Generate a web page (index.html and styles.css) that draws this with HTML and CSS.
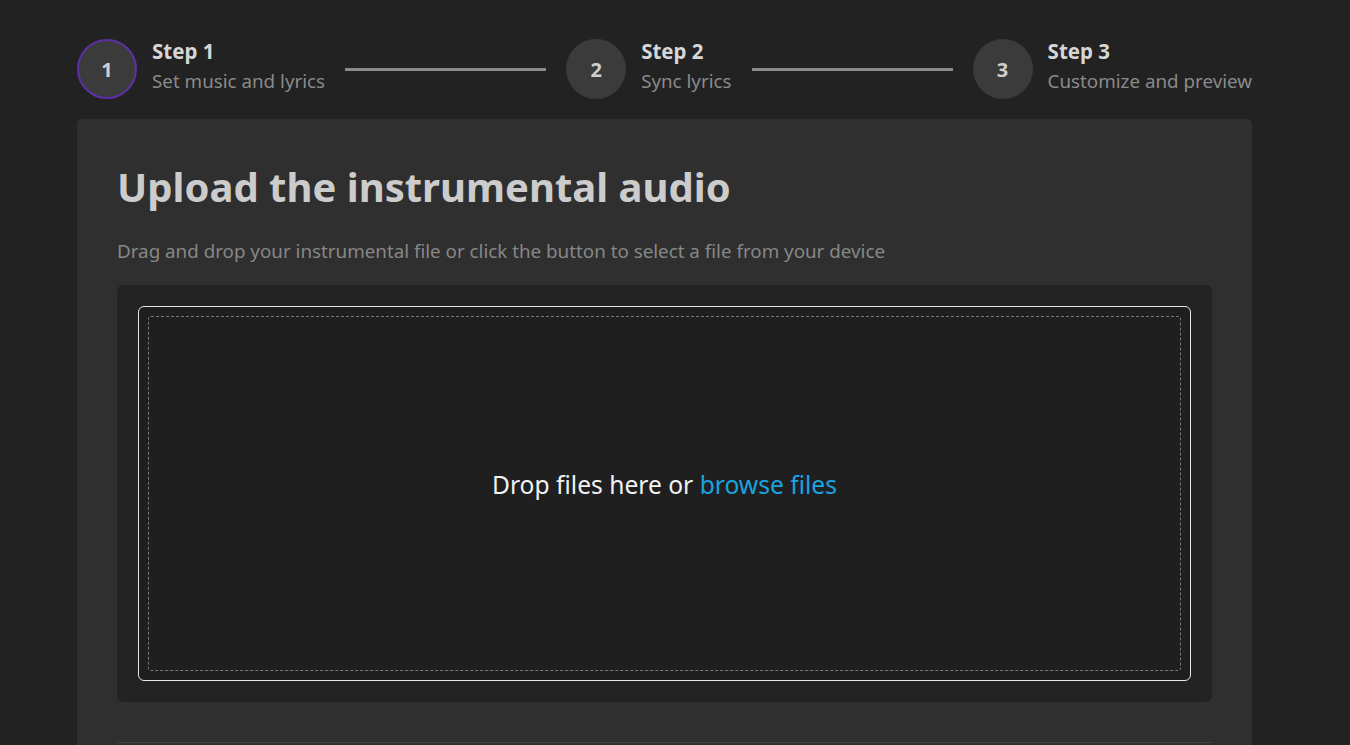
FILE: index.html
```html
<!DOCTYPE html>
<html lang="en">
<head>
<meta charset="utf-8">
<title>Upload</title>
<link rel="stylesheet" href="styles.css">
</head>
<body>
<div class="page">
  <div class="stepper">
    <div class="step">
      <div class="circle active">1</div>
      <div class="step-text">
        <div class="step-title">Step 1</div>
        <div class="step-sub">Set music and lyrics</div>
      </div>
    </div>
    <div class="connector"></div>
    <div class="step">
      <div class="circle">2</div>
      <div class="step-text">
        <div class="step-title">Step 2</div>
        <div class="step-sub">Sync lyrics</div>
      </div>
    </div>
    <div class="connector"></div>
    <div class="step">
      <div class="circle">3</div>
      <div class="step-text">
        <div class="step-title">Step 3</div>
        <div class="step-sub">Customize and preview</div>
      </div>
    </div>
  </div>
  <div class="card">
    <h1 class="title">Upload the instrumental audio</h1>
    <p class="desc">Drag and drop your instrumental file or click the button to select a file from your device</p>
    <div class="dropwrap">
      <div class="dropzone">
        <div class="dashed">
          <span class="drop-text">Drop files here or <span class="browse">browse files</span></span>
        </div>
      </div>
    </div>
    <div class="divider"></div>
  </div>
</div>
</body>
</html>
```
FILE: styles.css
```css
html, body {
  margin: 0;
  padding: 0;
  background: #222222;
  font-family: "Noto Sans", "Open Sans", sans-serif;
  overflow: hidden;
  height: 745px;
}
.page {
  width: 1175px;
  margin: 0 0 0 77px;
  padding-top: 39px;
}
.stepper {
  display: flex;
  align-items: center;
  gap: 20px;
  height: 60px;
}
.step {
  display: flex;
  align-items: center;
  gap: 15px;
}
.circle {
  width: 60px;
  height: 60px;
  box-sizing: border-box;
  border-radius: 50%;
  background: #3b3b3b;
  color: #cfcfcf;
  font-weight: 700;
  font-size: 20px;
  display: flex;
  align-items: center;
  justify-content: center;
}
.circle.active {
  border: 2px solid #5e30a8;
}
.step-text {
  display: flex;
  flex-direction: column;
  gap: 4px;
  padding-bottom: 6px;
}
.step-title {
  color: #d6d6d6;
  font-weight: 700;
  font-size: 20.5px;
  line-height: 26px;
}
.step-sub {
  color: #8a8a8a;
  font-size: 18.8px;
  line-height: 26px;
}
.connector {
  flex: 1;
  height: 3px;
  background: #8a8a8a;
}
.card {
  margin-top: 20px;
  background: #2f2f2f;
  border-radius: 5px 5px 0 0;
  padding: 40px 40px 0 40px;
  height: 640px;
  box-sizing: border-box;
}
.title {
  margin: 0;
  color: #cccccc;
  font-size: 40px;
  font-weight: 700;
  line-height: 56px;
}
.desc {
  margin: 24px 0 0;
  color: #878787;
  font-size: 18.8px;
  line-height: 24px;
}
.dropwrap {
  margin-top: 22px;
  background: #232323;
  border-radius: 6px;
  padding: 21px;
}
.dropzone {
  background: #1f1f1f;
  border: 1px solid #e6e6e6;
  border-radius: 6px;
  padding: 9px;
  height: 375px;
  box-sizing: border-box;
}
.dashed {
  height: 100%;
  border: 1px dashed #777777;
  border-radius: 3px;
  box-sizing: border-box;
  display: flex;
  align-items: center;
  justify-content: center;
  padding-bottom: 18px;
}
.drop-text {
  color: #f2f2f2;
  font-size: 24.6px;
}
.browse {
  color: #1aa3e0;
  cursor: pointer;
}
.divider {
  margin-top: 40px;
  height: 1px;
  background: #444444;
}
```
